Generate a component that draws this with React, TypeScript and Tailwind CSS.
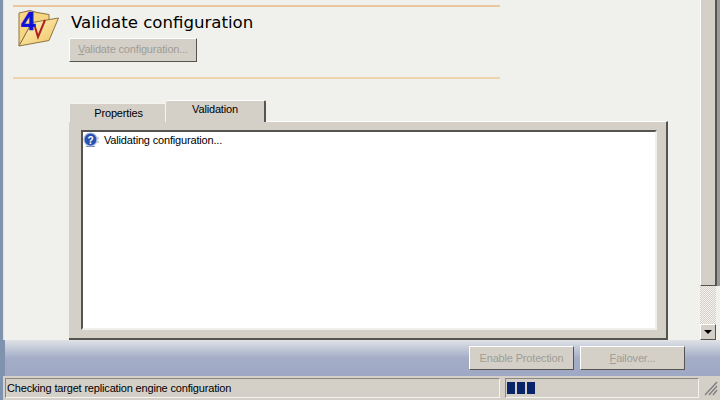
const F = "font-['Liberation_Sans',sans-serif]";
const T = "text-[11px] tracking-[-0.17px]";

function FolderIcon() {
  return (
    <svg width="46" height="38" viewBox="0 0 46 38" className="block overflow-visible">
      <defs>
        <linearGradient id="f1" x1="0" y1="0" x2="1" y2="1">
          <stop offset="0" stopColor="#fff6c8" />
          <stop offset="1" stopColor="#f0c25c" />
        </linearGradient>
      </defs>
      <path d="M2 3 L13 0.5 L20 2.5 L32 4.5 L32 12 L14 14 L2 36 Z" fill="#f6d680" stroke="#8f7440" strokeWidth="1" />
      <path d="M15 12.5 L41.5 8 L32 30.5 L2 36 Z" fill="url(#f1)" stroke="#8f7440" strokeWidth="1" />
      <path d="M18 17 L21 27 L28 10" fill="none" stroke="#b02020" strokeWidth="2" />
      <text x="4" y="20" fontFamily="'Liberation Sans',sans-serif" fontWeight="700" fontSize="26" fill="#1010d8" stroke="#1010d8" strokeWidth="0.6">4</text>
    </svg>
  );
}

function QuestionIcon() {
  return (
    <svg width="16" height="16" viewBox="0 0 16 16" className="block">
      <circle cx="7.5" cy="7.5" r="6.5" fill="#2a50b0" stroke="#a9bde0" strokeWidth="1.2" />
      <text x="4.5" y="11.5" fontFamily="'Liberation Sans',sans-serif" fontWeight="700" fontSize="10" fill="#fff">?</text>
      <path d="M3 14.5 H12" stroke="#7f8fb0" strokeWidth="1" />
      <circle cx="15" cy="6" r="0.7" fill="#888" />
      <circle cx="15" cy="10" r="0.7" fill="#888" />
    </svg>
  );
}

function Btn({ children, className }: { children: React.ReactNode; className: string }) {
  return (
    <div className={`flex items-center justify-center bg-[#d4d0c8] border border-t-white border-l-white border-r-[#55544f] border-b-[#55544f] ${T} text-[#a09d95] ${className}`}>
      {children}
    </div>
  );
}

export default function App() {
  return (
    <div className={`${F} w-[720px] h-[400px] overflow-hidden flex flex-col bg-[#f0f0ec] text-black`}>
      <div className="flex h-[340px]">
        <div className="w-[4px] flex shrink-0">
          <div className="w-[3px] bg-[#7f93ae]" />
          <div className="w-[1px] bg-[#dfe3e6]" />
        </div>
        <div className="flex-1 flex flex-col min-w-0">
          <div className="ml-[9px] mt-[5px] w-[487px] h-[2px] bg-[#e9c89e]" />
          <div className="flex mt-[3px]">
            <div className="ml-[13px] w-[46px] shrink-0"><FolderIcon /></div>
            <div className="ml-[6px] flex flex-col">
              <div className="font-['DejaVu_Sans',sans-serif] text-[16.6px] leading-[24px] mt-[1px] pl-[2px]">Validate configuration</div>
              <Btn className="mt-[3px] w-[128px] h-[24px] pb-[2px]">
                <span><u>V</u>alidate configuration...</span>
              </Btn>
            </div>
          </div>
          <div className="ml-[9px] mt-[15px] w-[487px] h-[2px] bg-[#eed3ac]" />
          <div className={`ml-[65px] mt-[21px] flex items-end h-[22px] z-10 ${T}`}>
            <div className="w-[97px] h-[19px] bg-[#d4d0c8] border border-b-0 border-[#f4f3ef] rounded-t-[2px] flex items-center justify-center pl-[2px]">Properties</div>
            <div className="w-[100px] h-[22px] bg-[#d4d0c8] border-t border-t-white border-r-2 border-r-[#55544f] rounded-t-[2px] flex items-center justify-center pb-[4px]">Validation</div>
          </div>
          <div className="ml-[65px] w-[599px] h-[219px] -mt-[1px] bg-[#d4d0c8] border-t border-t-white border-r-2 border-r-[#55544f] border-b-2 border-b-[#55544f] pt-[8px] pl-[12px]">
            <div className="w-[576px] h-[200px] bg-white border-2 border-t-[#55544f] border-l-[#55544f] border-r-[#f0efea] border-b-[#f0efea]">
              <div className={`flex items-center h-[16px] ${T}`}>
                <QuestionIcon />
                <span className="ml-[5px]">Validating configuration...</span>
              </div>
            </div>
          </div>
        </div>
        <div className="w-[20px] shrink-0 flex flex-col">
          <div className="h-[286px] flex">
            <div className="w-[16px] bg-[#d4d0c8] border border-l-white border-t-0 border-r-[#55544f] border-b-[#55544f]" />
            <div className="w-[1px] bg-[#55544f]" />
            <div className="w-[3px] bg-[#9a9a98]" />
          </div>
          <div className="flex-1 mr-[4px] bg-[repeating-conic-gradient(#d4d0c8_0_25%,#f4f3ef_0_50%)] bg-[length:2px_2px]" />
          <div className="h-[16px] mr-[4px] bg-[#d4d0c8] border border-t-white border-l-white border-r-[#55544f] border-b-[#55544f] flex items-center justify-center">
            <div className="w-0 h-0 border-x-[4px] border-x-transparent border-t-[4px] border-t-black" />
          </div>
        </div>
      </div>
      <div className="h-[36px] flex">
        <div className="w-[5px] bg-[#7f93ae]" />
        <div className="flex-1 bg-gradient-to-b from-[#dfe2e6] via-[#a3adc7] via-50% to-[#9ea8c4] flex justify-end pt-[6px] pr-[35px] gap-[6px]">
          <Btn className="w-[105px] h-[24px]"><span>Enable Protection</span></Btn>
          <Btn className="w-[105px] h-[24px]"><span><u>F</u>ailover...</span></Btn>
        </div>
      </div>
      <div className="h-[24px] bg-[#d4d0c8] flex">
        <div className="w-[3px] bg-[#7f93ae]" />
        <div className="flex pt-[2px] pl-[2px]">
          <div className={`w-[495px] h-[20px] border border-t-[#8a8880] border-l-[#8a8880] border-r-[#f4f3ef] border-b-[#f4f3ef] ${T} leading-[18px] pl-[1px]`}>
            Checking target replication engine configuration
          </div>
          <div className="ml-[5px] w-[194px] h-[20px] border border-t-[#8a8880] border-l-[#8a8880] border-r-[#f4f3ef] border-b-[#f4f3ef] flex items-center pl-[1px] gap-[2px]">
            <div className="w-[8px] h-[12px] bg-[#0a246a]" />
            <div className="w-[8px] h-[12px] bg-[#0a246a]" />
            <div className="w-[8px] h-[12px] bg-[#0a246a]" />
          </div>
          <svg width="15" height="16" viewBox="0 0 15 16" className="ml-[4px] mt-[2px] block">
            <path d="M14 2 L2 15 M14 6 L6 15 M14 10 L10 15" stroke="#808080" strokeWidth="1.4" fill="none" />
          </svg>
        </div>
      </div>
    </div>
  );
}
